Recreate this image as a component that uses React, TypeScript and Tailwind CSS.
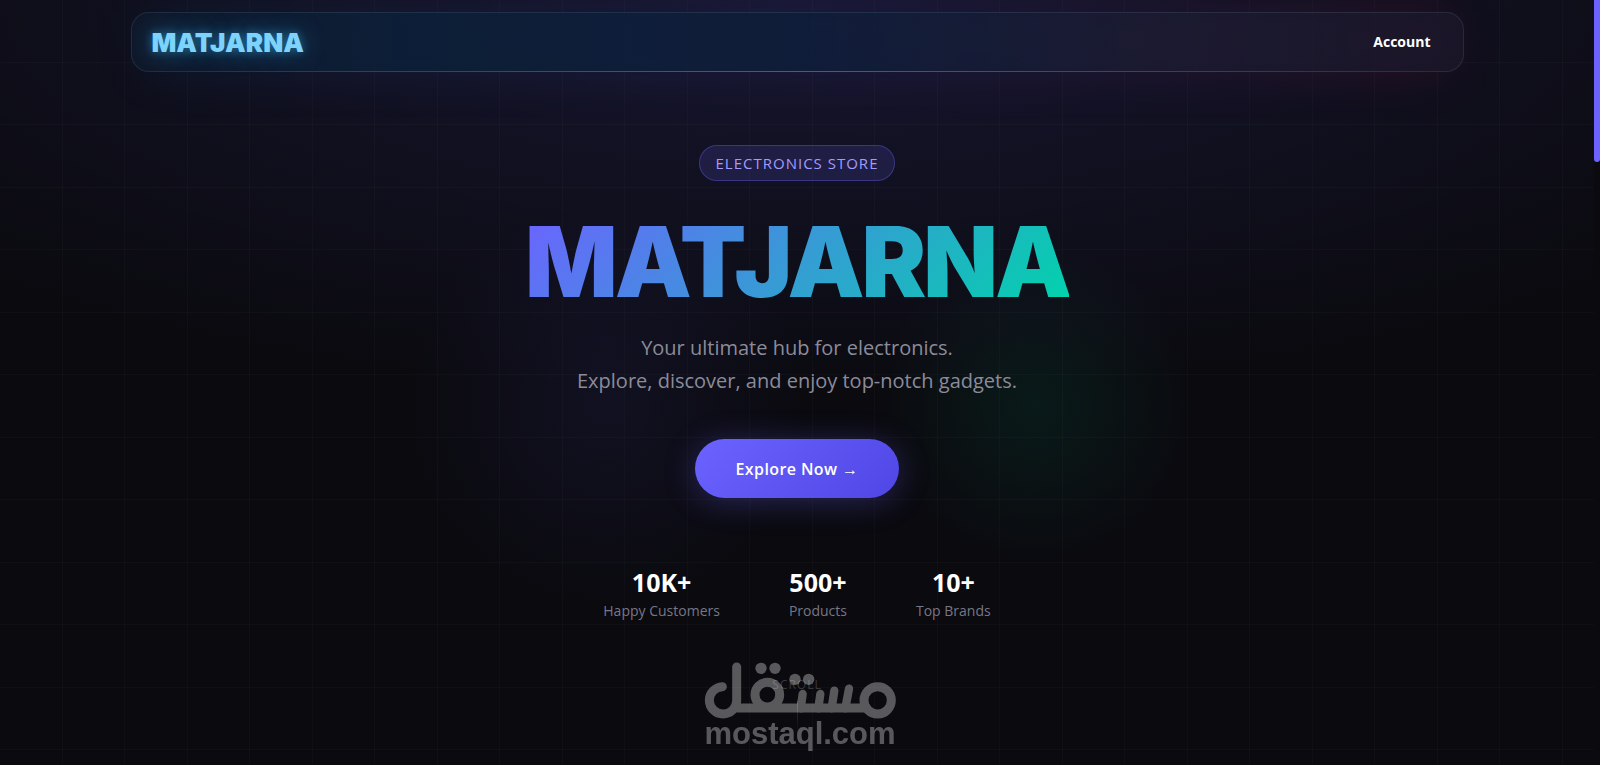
const stats = [
  { value: "10K+", label: "Happy Customers" },
  { value: "500+", label: "Products" },
  { value: "10+", label: "Top Brands" },
];

function Backdrop() {
  return (
    <div className="pointer-events-none absolute inset-0 overflow-hidden">
      {/* Top glow */}
      <div className="absolute inset-0 bg-[radial-gradient(ellipse_72%_52%_at_50%_0%,rgba(108,99,255,0.14),transparent)]" />
      {/* Colour orbs */}
      <div className="absolute inset-0 bg-[radial-gradient(circle_200px_at_38%_53%,rgba(108,99,255,0.08),transparent)]" />
      <div className="absolute inset-0 bg-[radial-gradient(circle_160px_at_65%_53%,rgba(0,212,140,0.08),transparent)]" />
      {/* Grid lines */}
      <div className="absolute inset-0 bg-[linear-gradient(rgba(255,255,255,0)_62px,rgba(255,255,255,0.02)_62px,rgba(255,255,255,0.02)_63px,rgba(255,255,255,0)_63px,rgba(255,255,255,0)_124px,rgba(255,255,255,0.02)_124px),linear-gradient(90deg,rgba(255,255,255,0)_62px,rgba(255,255,255,0.02)_62px,rgba(255,255,255,0.02)_63px,rgba(255,255,255,0)_63px,rgba(255,255,255,0)_124px,rgba(255,255,255,0.02)_124px)] bg-size-[125px_125px]" />
    </div>
  );
}

function Navbar() {
  return (
    <header className="relative mx-auto w-full max-w-[1333px]">
      {/* Neon halo behind the bar */}
      <div className="absolute inset-x-4 inset-y-0 bg-[linear-gradient(90deg,rgba(0,120,200,0.1),rgba(60,60,200,0.12)_55%,rgba(220,20,80,0.12))] blur-xl" />
      <nav className="relative flex h-[60px] items-center justify-between rounded-[18px] border border-slate-400/15 bg-[linear-gradient(90deg,rgba(16,26,44,0.8),rgba(12,32,56,0.85)_20%,rgba(14,30,58,0.85)_50%,rgba(26,28,50,0.8)_75%,rgba(26,24,42,0.75))] pr-8 pl-5">
        <a
          href="#"
          className="font-['Inter'] text-[26px] font-black text-[#7dd3fc] [text-shadow:0_0_10px_rgba(56,189,248,0.45),0_0_24px_rgba(56,189,248,0.45)]"
        >
          MATJARNA
        </a>
        <a href="#account" className="text-sm font-bold text-white">
          Account
        </a>
        <div className="absolute inset-x-4 -bottom-px h-px bg-linear-to-r from-transparent via-cyan-500/50 to-transparent" />
      </nav>
    </header>
  );
}

function Watermark() {
  return (
    <div className="pointer-events-none absolute inset-x-0 bottom-4 flex flex-col items-center pl-1.5 text-white opacity-32">
      <svg viewBox="72 65 576 170" className="w-48" fill="none" stroke="currentColor" strokeWidth="27" strokeLinecap="round">
        <path d="M127 139A41 41 0 1 0 170 181V80M168 203H560" />
        <circle cx="262" cy="163" r="37" />
        <circle cx="593" cy="180" r="41" />
        <path d="M368 161L362 204M421 161L415 204M463 151L455 204M507 145L496 204" strokeWidth="25" />
        <g fill="currentColor" stroke="none">
          <circle cx="243" cy="84" r="17" />
          <circle cx="285" cy="84" r="17" />
          <circle cx="345" cy="117" r="17" />
          <circle cx="386" cy="117" r="17" />
        </g>
      </svg>
      <span className="font-['Liberation_Sans'] text-[31px] leading-[30px] font-bold">mostaql.com</span>
    </div>
  );
}

export default function App() {
  return (
    <div className="flex min-h-screen bg-[#0a0a0f] font-['Open_Sans',sans-serif] text-white">
      <main className="relative flex flex-1 flex-col items-center pt-3">
        <Backdrop />
        <Navbar />

        {/* Hero */}
        <section className="relative flex flex-col items-center pt-[73px] text-center">
          <span className="rounded-full border border-[#6c63ff]/35 bg-[#6c63ff]/15 px-4 py-1.5 text-[15px] leading-[22px] tracking-[1px] text-[#a29bfe]">
            ELECTRONICS STORE
          </span>
          <h1 className="mt-[30px] bg-[linear-gradient(135deg,#6c63ff,#00d4aa)] bg-clip-text font-['Inter'] text-[97px] leading-[102px] font-black tracking-[-3px] text-transparent">
            MATJARNA
          </h1>
          <p className="mt-[18px] text-xl leading-[33px] text-[#8b8b9a]">
            Your ultimate hub for electronics.
            <br />
            Explore, discover, and enjoy top-notch gadgets.
          </p>
          <button
            type="button"
            className="mt-[42px] h-[59px] w-[204px] rounded-full bg-linear-135 from-[#6c63ff] to-[#4f46e5] text-base font-semibold tracking-wide text-white shadow-[0_4px_32px_rgba(108,99,255,0.3)]"
          >
            Explore Now →
          </button>
          <dl className="mt-[66px] flex gap-[69px]">
            {stats.map((stat) => (
              <div key={stat.label} className="flex flex-col-reverse">
                <dt className="text-sm leading-[22px] text-[#777785]">{stat.label}</dt>
                <dd className="text-[25px] leading-9 font-bold">{stat.value}</dd>
              </div>
            ))}
          </dl>
        </section>

        <div className="relative mt-[55px] flex flex-col items-center gap-2 text-xs tracking-[1px] text-white/20">
          SCROLL
          <span className="h-8 w-px bg-linear-to-b from-[#6c63ff]/40 to-transparent" />
        </div>

        <Watermark />
      </main>

      {/* Page scroll thumb */}
      <div className="w-1.5 shrink-0">
        <div className="h-[162px] rounded-b-full bg-[#6c63ff]" />
      </div>
    </div>
  );
}
